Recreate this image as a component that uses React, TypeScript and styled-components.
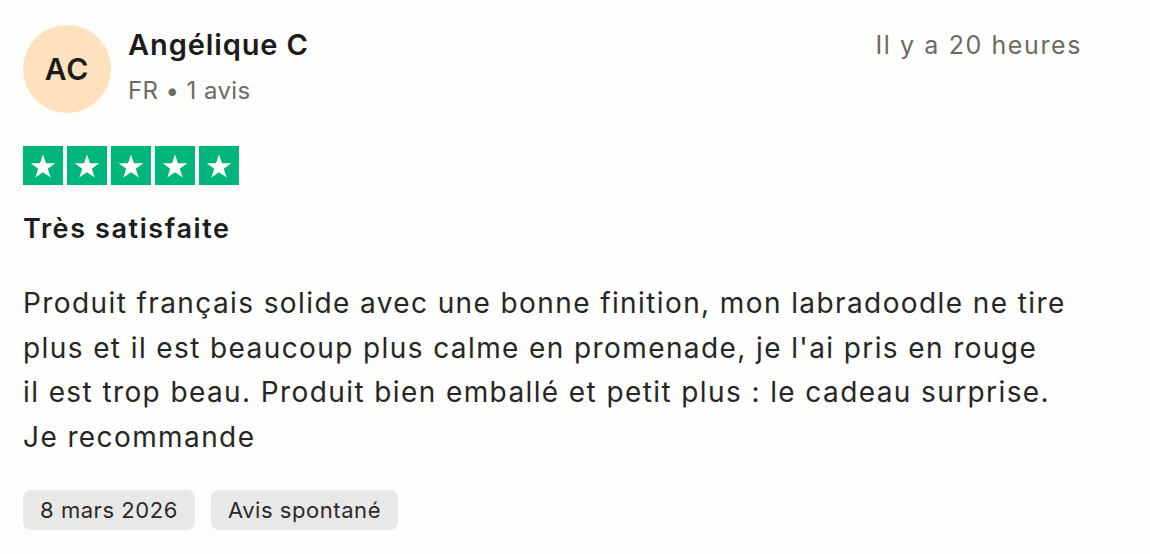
import React from "react";
import styled, { createGlobalStyle } from "styled-components";

const Global = createGlobalStyle`
  html, body { margin: 0; padding: 0; background: #fdfdfc; }
  body { font-family: Inter, "Noto Sans", sans-serif; color: #262626; }
`;

const Card = styled.article`
  width: 1150px;
  height: 554px;
  box-sizing: border-box;
  padding: 25px 68px 0 23px;
  background: #fdfdfc;
  display: flex;
  flex-direction: column;
`;

const Header = styled.header`
  display: flex;
  align-items: flex-start;
  gap: 17px;
`;

const Avatar = styled.div`
  width: 88px;
  height: 88px;
  flex: none;
  border-radius: 50%;
  background: #fee2bd;
  display: flex;
  align-items: center;
  justify-content: center;
  font-size: 30px;
  font-weight: 600;
  color: #1c1c1c;
  letter-spacing: 1px;
`;

const Who = styled.div`
  flex: 1;
  display: flex;
  flex-direction: column;
  padding-top: 2px;
`;

const Name = styled.div`
  font-size: 29px;
  font-weight: 600;
  line-height: 36px;
  color: #1c1c1c;
  letter-spacing: 0.9px;
`;

const Meta = styled.div`
  font-size: 24px;
  line-height: 30px;
  margin-top: 13px;
  color: #6b6a64;
  letter-spacing: 0.4px;
`;

const Time = styled.time`
  font-size: 25px;
  line-height: 30px;
  color: #6b6a64;
  padding-top: 5px;
  letter-spacing: 1.6px;
`;

const Stars = styled.div`
  display: flex;
  gap: 4px;
  margin-top: 33px;
`;

const StarBox = styled.div`
  width: 40px;
  height: 39px;
  background: #00b67a;
  display: flex;
  align-items: center;
  justify-content: center;
`;

const Title = styled.h2`
  margin: 28px 0 0;
  font-size: 27px;
  line-height: 32px;
  font-weight: 600;
  color: #1c1c1c;
  letter-spacing: 1.6px;
`;

const Body = styled.p`
  margin: 36px 0 0;
  font-size: 28px;
  line-height: 44.6px;
  color: #262626;
  letter-spacing: 1.4px;
  white-space: pre;
`;

const Tags = styled.div`
  display: flex;
  gap: 16px;
  margin-top: 31px;
`;

const Tag = styled.span`
  height: 40px;
  box-sizing: border-box;
  padding: 0 17px;
  border-radius: 8px;
  background: #e8e8e6;
  display: flex;
  align-items: center;
  font-size: 22px;
  color: #2a2a2a;
  letter-spacing: 0.55px;
`;

const Star = () => (
  <StarBox>
    <svg width="28" height="28" viewBox="0 0 24 24">
      <path
        d="M12 2.2l2.55 7.5h7.95l-6.4 4.65 2.45 7.55L12 17.25 5.45 21.9l2.45-7.55L1.5 9.7h7.95z"
        fill="#fff"
      />
    </svg>
  </StarBox>
);

export default function App() {
  return (
    <>
      <Global />
      <Card>
        <Header>
          <Avatar>AC</Avatar>
          <Who>
            <Name>Angélique C</Name>
            <Meta>FR • 1 avis</Meta>
          </Who>
          <Time>Il y a 20 heures</Time>
        </Header>
        <Stars>
          {[0, 1, 2, 3, 4].map((i) => (
            <Star key={i} />
          ))}
        </Stars>
        <Title>Très satisfaite</Title>
        <Body>
          {"Produit français solide avec une bonne finition, mon labradoodle ne tire\nplus et il est beaucoup plus calme en promenade, je l'ai pris en rouge\nil est trop beau. Produit bien emballé et petit plus : le cadeau surprise.\nJe recommande"}
        </Body>
        <Tags>
          <Tag>8 mars 2026</Tag>
          <Tag>Avis spontané</Tag>
        </Tags>
      </Card>
    </>
  );
}
